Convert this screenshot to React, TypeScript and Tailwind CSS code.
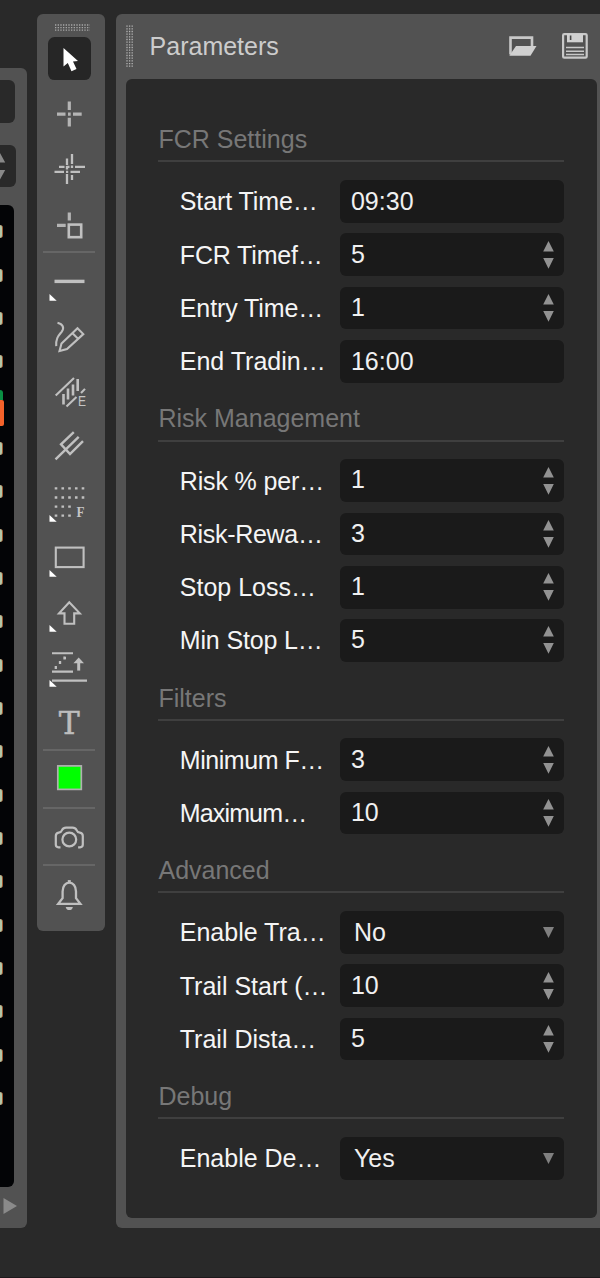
import type { ReactNode } from "react";

type Field = { label: string; value: string; kind: "time" | "number" | "select"; tracking?: string };

const SECTIONS: { title: string; fields: Field[] }[] = [
  {
    title: "FCR Settings",
    fields: [
      { label: "Start Time…", value: "09:30", kind: "time", tracking: "tracking-[-0.1px]" },
      { label: "FCR Timef…", value: "5", kind: "number", tracking: "tracking-[-0.15px]" },
      { label: "Entry Time…", value: "1", kind: "number", tracking: "tracking-[-0.1px]" },
      { label: "End Tradin…", value: "16:00", kind: "time" },
    ],
  },
  {
    title: "Risk Management",
    fields: [
      { label: "Risk % per…", value: "1", kind: "number", tracking: "tracking-[-0.15px]" },
      { label: "Risk-Rewa…", value: "3", kind: "number", tracking: "tracking-[-0.3px]" },
      { label: "Stop Loss…", value: "1", kind: "number" },
      { label: "Min Stop L…", value: "5", kind: "number", tracking: "tracking-[-0.15px]" },
    ],
  },
  {
    title: "Filters",
    fields: [
      { label: "Minimum F…", value: "3", kind: "number", tracking: "tracking-[-0.45px]" },
      { label: "Maximum…", value: "10", kind: "number", tracking: "tracking-[-0.85px]" },
    ],
  },
  {
    title: "Advanced",
    fields: [
      { label: "Enable Tra…", value: "No", kind: "select" },
      { label: "Trail Start (…", value: "10", kind: "number" },
      { label: "Trail Dista…", value: "5", kind: "number" },
    ],
  },
  {
    title: "Debug",
    fields: [{ label: "Enable De…", value: "Yes", kind: "select" }],
  },
];

const VALUE_PADDING = {
  time: "pl-[10.5px]",
  number: "pl-[10.5px] pb-[2.2px]",
  select: "pl-[13.5px]",
};

// Tool glyphs are drawn around the origin, one 52x55 cell each
const POINTER_TOOLS: { name: string; icon: ReactNode }[] = [
  {
    name: "Pointer",
    icon: <path d="M-5.5 -10.5V8L-1.2 4.3L2.5 12.6L7.5 10.3L4 2.8L9 2.3Z" fill="#fff" stroke="none" />,
  },
  {
    name: "Crosshair",
    icon: (
      <path d="M-12 .5H-3.5M4 .5H12.7M.3 -12V-3.7M.3 4.2V13M-1 .5H1.7" stroke="#b4b4b4" strokeWidth="3.2" />
    ),
  },
  {
    name: "Synced crosshair",
    icon: (
      <path
        d="M-14.5 3.3H-5M-3 3.3H-.8M1.5 3.3H11M-10 -1.8H-4.5M-2.5 -1.8H.5M2 -1.8H4M6 -1.8H16M-2 -10V-3.5M-2 -2.5V1M-2 5.5V15.5M3 -14.5V-4.5M3 -3V-.5M3 6.5V11.5"
        strokeWidth="2.3"
      />
    ),
  },
  {
    name: "Measure",
    icon: (
      <>
        <path d="M-12 .8H-3.3M.3 -12V-4" stroke="#b4b4b4" strokeWidth="3.2" />
        <rect x="-.2" y="0" width="12.4" height="12.6" strokeWidth="2.6" />
      </>
    ),
  },
];

const DRAWING_TOOLS: { name: string; icon: ReactNode; menu?: boolean }[] = [
  { name: "Line", menu: true, icon: <path d="M-14.5 .8H15.5" strokeWidth="3.4" /> },
  {
    name: "Pencil",
    icon: (
      <path d="M-11.5 -12.8C-6 -11.5 -4.5 -8 -7.2 -4C-10 -.3 -13.3 2 -12.8 10.5M-9.5 15.5L-7.5 8L8.5 -7.3L14.3 -1.5L-2 13.5Z M3.3 -2.5L9.3 3.3" />
    ),
  },
  {
    name: "Elliott wave",
    icon: (
      <>
        <path d="M-13.3 5L5 -12.7M-2.5 16L7.5 6.5M12 2.5L16 -1.7" />
        <path d="M-5.5 3.5V14M-1 -2V9M4 -6V5M8.7 -11.5V.5" strokeWidth="2.6" />
        <text x="9" y="15.7" fontSize="15" className="fill-[#c4c4c4] stroke-none font-['Liberation_Sans',sans-serif]" textLength="8" lengthAdjust="spacingAndGlyphs">
          E
        </text>
      </>
    ),
  },
  { name: "Pitchfork", icon: <path d="M-13.5 13.8L9.7 -8.8M4.8 -13.5L-8 -1.2L1 8.5L14 -4.5" strokeWidth="2.4" /> },
  {
    name: "Fibonacci",
    menu: true,
    icon: (
      <>
        <path
          d="M-14.3 -13.2H16.5M-14.3 -4.1H16.5M-14.3 5H3.2M-14.3 14H3.2"
          strokeWidth="2.3"
          strokeDasharray="2.6 4.15"
        />
        <text x="7.5" y="15" fontSize="15" className="fill-[#c4c4c4] stroke-none font-['Liberation_Serif',serif] font-bold" textLength="8" lengthAdjust="spacingAndGlyphs">
          F
        </text>
      </>
    ),
  },
  { name: "Rectangle", menu: true, icon: <rect x="-13.2" y="-9" width="27.8" height="19.5" /> },
  { name: "Arrow", menu: true, icon: <path d="M.3 -9.3L-10 1.8H-4.5V12.2H5.2V1.8H10.8Z" /> },
  {
    name: "Risk reward",
    menu: true,
    icon: (
      <>
        <path d="M-17 -13.3H4M-17 5H4M-17 14H18" />
        <path d="M-4.5 -10V-7M-9 -5.5V-2.5M-13.2 -.5V2.5M-5 -8.5H-3M-9.8 -4H-7.8" strokeWidth="2.3" />
        <path d="M9.7 4V-5" strokeWidth="3" />
        <path d="M4.4 -3.3L9.7 -9L15 -3.3Z" fill="#c0c0c0" stroke="none" />
      </>
    ),
  },
  {
    name: "Text",
    icon: (
      <text x=".3" y="12.6" fontSize="31.5" textAnchor="middle" strokeWidth=".5" className="fill-[#bdbdbd] stroke-[#bdbdbd] font-['DejaVu_Serif',serif]">
        T
      </text>
    ),
  },
];

function Tool({ name, active, menu, children }: { name: string; active?: boolean; menu?: boolean; children: ReactNode }) {
  return (
    <button aria-label={name} className="block">
      <svg width="52" height="55.2" viewBox="-26 -27.6 52 55.2" fill="none" stroke="#c0c0c0" strokeWidth="2.1" className="block">
        {active && <rect x="-21" y="-21.5" width="43" height="43" rx="6.5" fill="#262626" stroke="none" />}
        {children}
        {menu && <path d="M-19.5 13.4V20.1H-12.3Z" fill="#fff" stroke="none" />}
      </svg>
    </button>
  );
}

function Divider() {
  return <div className="h-[2px] w-[52px] shrink-0 bg-[#666666]" />;
}

function Toolbar() {
  return (
    <div className="mt-[14px] ml-[10.3px] flex h-[917px] w-[67.7px] shrink-0 flex-col items-start rounded-[6px] bg-[#525252] pl-[5.7px]">
      <svg width="36" height="7" className="mt-[10px] ml-[12px] block shrink-0" stroke="#a8a8a8" strokeWidth="1.3" strokeDasharray="1.3 1.37">
        <path d="M0 1H35M0 3.6H35M0 6.2H35" />
      </svg>
      <div className="flex flex-col">
        {POINTER_TOOLS.map((t, i) => (
          <Tool key={t.name} name={t.name} active={i === 0}>{t.icon}</Tool>
        ))}
      </div>
      <div className="-mt-px">
        <Divider />
      </div>
      <div className="flex flex-col">
        {DRAWING_TOOLS.map((t) => (
          <Tool key={t.name} name={t.name} menu={t.menu}>{t.icon}</Tool>
        ))}
      </div>
      <Divider />
      <Tool name="Color">
        <rect x="-11.2" y="-12.7" width="23.5" height="23.5" fill="#00ff00" stroke="#b0b0b0" strokeWidth="1.7" />
      </Tool>
      <Divider />
      <Tool name="Screenshot">
        <path
          d="M-8.5 10.7H-10.5Q-13.2 10.7 -13.2 8V-.5Q-13.2 -3.5 -10.3 -4Q-7.7 -4.5 -6.8 -6.8Q-5.7 -9 -3 -9H3.6Q6.3 -9 7.4 -6.8Q8.3 -4.5 10.9 -4Q13.8 -3.5 13.8 -.5V8Q13.8 10.7 11.1 10.7H9.1"
          strokeWidth="2.2"
        />
        <circle cx=".3" cy="2.9" r="6.9" strokeWidth="2.2" />
      </Tool>
      <Divider />
      <Tool name="Alerts">
        <path d="M-10.8 10.2H11.4L7 4.5V-2C7 -7.5 4 -10.9 .3 -10.9S-6.4 -7.5 -6.4 -2V4.5Z" strokeWidth="2.3" />
        <path d="M.3 -13.5V-10.5" strokeWidth="3" />
        <path d="M-3.3 13.3H3.9Q3 16.5 .3 16.5T-3.3 13.3Z" fill="#c0c0c0" stroke="none" />
      </Tool>
    </div>
  );
}

// Right edge of the neighbouring chart window with its price scale
function ChartEdge() {
  return (
    <div className="mt-[68px] flex h-[1160px] w-[27px] shrink-0 flex-col rounded-r-[6px] bg-[#525252] pt-[12px]">
      <div className="h-[43px] w-[14.5px] shrink-0 rounded-r-[6px] bg-[#292929]" />
      <div className="mt-[21.5px] h-[42.5px] w-[16.3px] shrink-0 rounded-r-[6px] bg-[#292929]">
        <svg width="6" height="42" className="block" fill="#898989">
          <path d="M0 8L5.2 17.5H0ZM0 25H5.2L0 34.5Z" />
        </svg>
      </div>
      <div className="mt-[18px] h-[982px] w-[14.4px] shrink-0 overflow-hidden rounded-r-[6px] bg-[#030406] pt-[5px]">
        {Array.from({ length: 21 }, (_, i) =>
          i === 4 ? (
            <div key={i} className="flex h-[43.35px] flex-col pt-[7px]">
              <div className="h-[10px] w-[3px] rounded-tr-[3px] bg-[#0a8f43]" />
              <div className="h-[26px] w-[3.7px] shrink-0 rounded-r-[2px] bg-[#f4622a]" />
            </div>
          ) : (
            <div key={i} className="flex h-[43.35px] items-center">
              <div className="h-[13px] w-[3px] rounded-r-[3px] border-r border-[#a0562c] bg-[#b3c8a8]" />
            </div>
          )
        )}
      </div>
      <svg width="20" height="18" className="mt-[10px] block shrink-0" fill="#8a8a8a">
        <path d="M3.5 1V17L17 9Z" />
      </svg>
    </div>
  );
}

function Row({ field }: { field: Field }) {
  return (
    <div className="mb-[10.66px] flex h-[42.67px] items-center">
      <span className={`w-[182px] shrink-0 pl-[21.3px] whitespace-nowrap text-[#f5f5f5] ${field.tracking ?? ""}`}>{field.label}</span>
      <div className="flex h-full w-[224px] items-center justify-between rounded-[6px] bg-[#1a1a1a] pr-[10.7px]">
        <span className={`text-[#f0f0f0] ${VALUE_PADDING[field.kind]}`}>{field.value}</span>
        {field.kind === "number" && (
          <svg width="11" height="28" fill="#929292" className="block">
            <path d="M.2 10.5L5.5 0L10.8 10.5ZM.2 17H10.8L5.5 27.8Z" />
          </svg>
        )}
        {field.kind === "select" && (
          <svg width="11" height="11" fill="#808080" className="block">
            <path d="M0 0H11L5.5 11Z" />
          </svg>
        )}
      </div>
    </div>
  );
}

function ParametersPanel() {
  return (
    <div className="mt-[14px] ml-[11px] flex h-[1214px] w-[484px] shrink-0 flex-col rounded-l-[6px] bg-[#525252] pl-[10.3px]">
      <div className="flex h-[64.5px] shrink-0 items-center">
        <svg width="7" height="43" className="block" stroke="#b4b4b4" strokeWidth="1.3" strokeDasharray="1.3 1.37">
          <path d="M1 .5V42.5M3.6 .5V42.5M6.2 .5V42.5" />
        </svg>
        <h1 className="ml-[16.3px] flex-1 text-[#cccccc]">Parameters</h1>
        <button aria-label="Open" className="mr-[25px]">
          <svg width="28" height="20" className="block">
            <path d="M1.5 18.5V1.6H23V11" fill="none" stroke="#c8c8c8" strokeWidth="2.6" />
            <path d="M.3 19.8L7 10H27.5L21.5 19.8Z" fill="#d0d0d0" />
          </svg>
        </button>
        <button aria-label="Save" className="mr-[12px]">
          <svg width="26" height="26" fill="none" stroke="#c8c8c8" className="block">
            <rect x="1.1" y="1.1" width="23.6" height="23.6" rx="1.2" strokeWidth="2.2" />
            <path d="M5 1H21V9.3H5Z" fill="#d0d0d0" stroke="none" />
            <path d="M8.6 2.5V7" stroke="#484848" strokeWidth="1.6" />
            <path d="M4 14.5H22M4 18.2H22M4 21.5H22" strokeWidth="1.6" />
          </svg>
        </button>
      </div>
      <div className="h-[1139px] w-[470.3px] shrink-0 rounded-[6px] bg-[#292929] pt-[35.5px] pl-[32.2px]">
        {SECTIONS.map((section) => (
          <section key={section.title} className="w-[406px]">
            <h2 className="flex h-[48.3px] items-center border-b-2 border-[#3f3f3f] pt-[4px] text-[#777777]">{section.title}</h2>
            <div className="pt-[17.7px]">
              {section.fields.map((f) => (
                <Row key={f.label} field={f} />
              ))}
            </div>
          </section>
        ))}
      </div>
    </div>
  );
}

export default function App() {
  return (
    <main className="flex h-[1278px] w-[600px] items-start overflow-hidden border-b border-[#1d181b] bg-[#292929] font-['Liberation_Sans',Arial,sans-serif] text-[25px] leading-[30px]">
      <ChartEdge />
      <Toolbar />
      <ParametersPanel />
    </main>
  );
}
